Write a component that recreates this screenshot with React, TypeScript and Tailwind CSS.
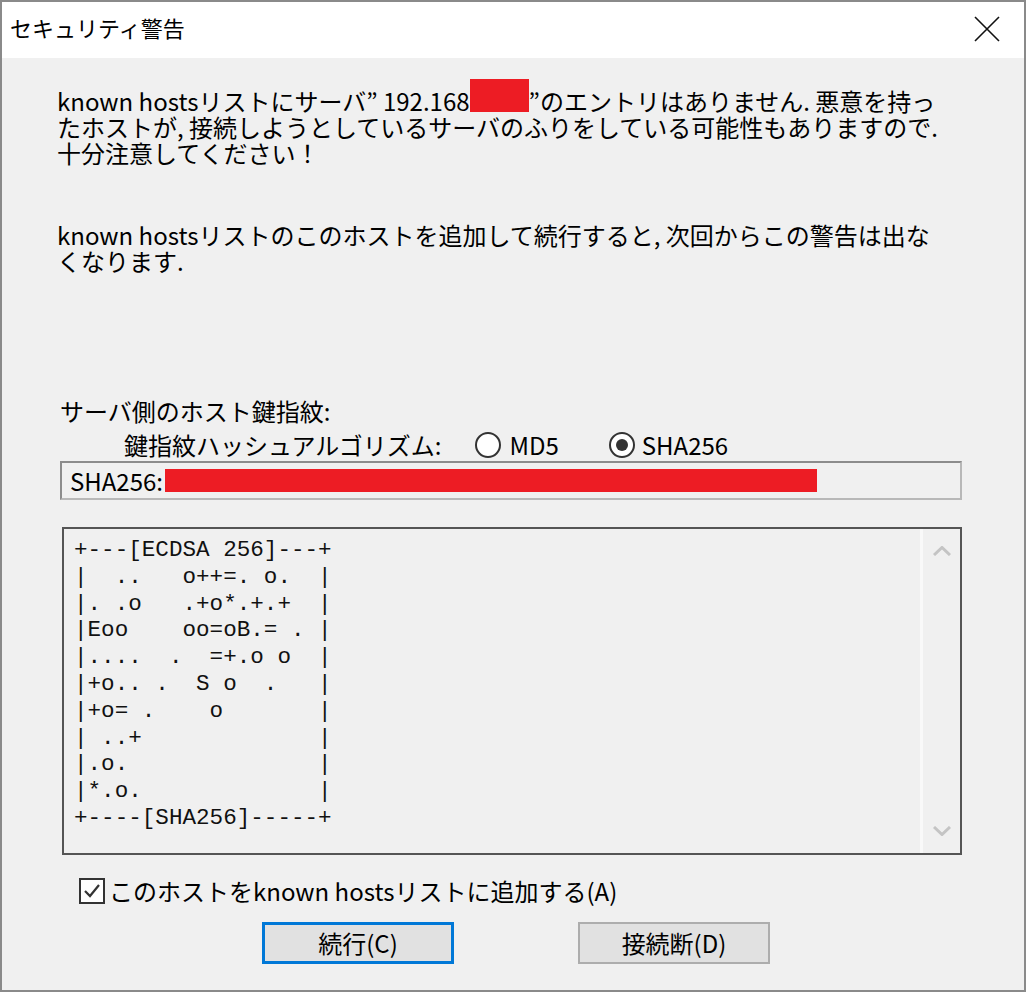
import React from "react";

const ui = { fontFamily: '"Noto Sans CJK JP", "Noto Sans", sans-serif' };
const mono = { fontFamily: '"Liberation Mono", "DejaVu Sans Mono", monospace' };

const art = [
  "+---[ECDSA 256]---+",
  "|  ..   o++=. o.  |",
  "|. .o   .+o*.+.+  |",
  "|Eoo    oo=oB.= . |",
  "|....  .  =+.o o  |",
  "|+o.. .  S o  .   |",
  "|+o= .    o       |",
  "| ..+             |",
  "|.o.              |",
  "|*.o.             |",
  "+----[SHA256]-----+",
];

const Radio = ({ checked }: { checked?: boolean }) => (
  <span className="w-[26px] h-[26px] rounded-full border-2 border-[#333] bg-white flex items-center justify-center">
    {checked && <span className="w-[12px] h-[12px] rounded-full bg-[#333]" />}
  </span>
);

const App = () => {
  return (
    <div
      className="w-[1026px] h-[992px] border-2 border-[#8a8a8a] bg-[#f0f0f0] flex flex-col text-black"
      style={ui}
    >
      {/* title bar */}
      <div className="h-[56px] bg-white flex items-center justify-between pl-[8px] pr-[24px] pb-[5px]">
        <span className="text-[22px]">セキュリティ警告</span>
        <svg width="26" height="26" viewBox="0 0 26 26" className="mt-[3px]">
          <path d="M1 1 L25 25 M25 1 L1 25" stroke="#111" strokeWidth="1.6" fill="none" />
        </svg>
      </div>

      <div className="flex flex-col pl-[55px] pr-[62px] pt-[21px] text-[24px] leading-[26px]">
        <p className="whitespace-nowrap">
          known hostsリストにサーバ” 192.168
          <span className="inline-block w-[59px] h-[33px] bg-[#ed1c24] align-[-1px]" />
          ”のエントリはありません. 悪意を持っ
          <br />
          たホストが, 接続しようとしているサーバのふりをしている可能性もありますので.
          <br />
          十分注意してください！
        </p>

        <p className="whitespace-nowrap mt-[56px]">
          known hostsリストのこのホストを追加して続行すると, 次回からこの警告は出な
          <br />
          くなります.
        </p>

        <p className="mt-[124px] pl-[3px]">サーバ側のホスト鍵指紋:</p>

        <div className="flex items-center h-[26px] mt-[8px] pl-[67px]">
          <span>鍵指紋ハッシュアルゴリズム:</span>
          <span className="ml-[34px] flex items-center gap-[8px]">
            <Radio />
            MD5
          </span>
          <span className="ml-[50px] flex items-center gap-[7px]">
            <Radio checked />
            SHA256
          </span>
        </div>

        <div className="mt-[3px] ml-[3px] h-[39px] border-2 border-t-[#8c8c8c] border-l-[#8c8c8c] border-b-[#b8b8b8] border-r-[#b8b8b8] flex items-center pl-[8px]">
          <span>SHA256:</span>
          <span className="ml-[2px] w-[652px] h-[23px] bg-[#ed1c24]" />
        </div>

        <div className="mt-[27px] ml-[5px] h-[328px] border-2 border-[#555] flex">
          <pre className="flex-1 pl-[10px] pt-[8px] text-[22.6px] leading-[26.8px] text-[#111]" style={mono}>
            {art.join("\n")}
          </pre>
          <div className="w-[40px] border-l-[3px] border-[#f9f9f9] flex flex-col items-center justify-between py-[17px]">
            <svg width="18" height="10" viewBox="0 0 18 10">
              <path d="M1 9 L9 1.5 L17 9" stroke="#c4c4c4" strokeWidth="3" fill="none" />
            </svg>
            <svg width="18" height="10" viewBox="0 0 18 10">
              <path d="M1 1 L9 8.5 L17 1" stroke="#c4c4c4" strokeWidth="3" fill="none" />
            </svg>
          </div>
        </div>

        <div className="mt-[23px] ml-[22px] flex items-center h-[26px]">
          <span className="w-[26px] h-[26px] border-2 border-[#333] bg-white flex items-center justify-center">
            <svg width="20" height="20" viewBox="0 0 20 20">
              <path d="M3 10 L8 15 L17 4" stroke="#333" strokeWidth="2.2" fill="none" />
            </svg>
          </span>
          <span className="ml-[4px] whitespace-nowrap">このホストをknown hostsリストに追加する(A)</span>
        </div>

        <div className="mt-[18px] flex">
          <button className="ml-[205px] w-[192px] h-[42px] border-[3px] border-[#0078d7] bg-[#e1e1e1] text-[24px]">
            続行(C)
          </button>
          <button className="ml-[124px] w-[192px] h-[42px] border-2 border-[#adadad] bg-[#e1e1e1] text-[24px]">
            接続断(D)
          </button>
        </div>
      </div>
    </div>
  );
};

export default App;
